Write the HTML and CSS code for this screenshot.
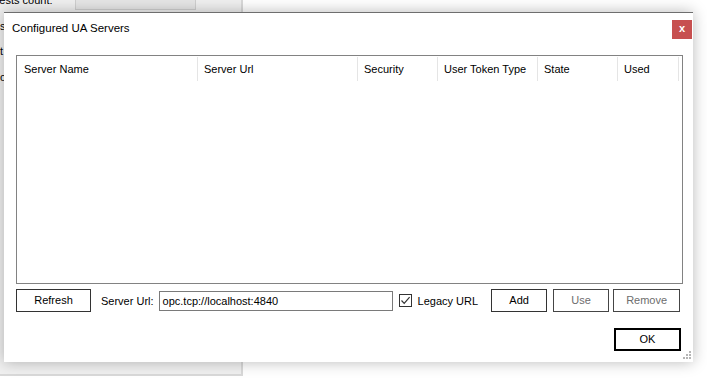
FILE: index.html
```html
<!DOCTYPE html>
<html>
<head>
<meta charset="utf-8">
<title>Configured UA Servers</title>
<link rel="stylesheet" href="styles.css">
</head>
<body>
<div class="mainForm">
    <span class="mainLabel">Requests count:</span>
    <span class="mainBox"></span>
    <span class="edgeText t1">s</span>
    <span class="edgeText t2">t</span>
    <span class="edgeText t3">o</span>
</div>

<div class="dialog">
    <div class="titleBar">
        <span class="title">Configured UA Servers</span>
        <span class="closeBtn">x</span>
    </div>
    <div class="content">
        <div class="listView">
            <div class="listHead">
                <span class="col c1">Server Name</span>
                <span class="col c2">Server Url</span>
                <span class="col c3">Security</span>
                <span class="col c4">User Token Type</span>
                <span class="col c5">State</span>
                <span class="col c6">Used</span>
            </div>
        </div>
        <div class="toolRow">
            <span class="btn btnRefresh">Refresh</span>
            <span class="lbl">Server Url:</span>
            <span class="textBox">opc.tcp://localhost:4840</span>
            <span class="checkBox">
                <svg width="11" height="11" viewBox="0 0 11 11"><path d="M1.5 5.5 L4.2 8.3 L9.6 2.2" fill="none" stroke="#333" stroke-width="1.2"/></svg>
            </span>
            <span class="lbl lblLegacy">Legacy URL</span>
            <span class="btn btnAdd">Add</span>
            <span class="btn btnUse disabled">Use</span>
            <span class="btn btnRemove disabled">Remove</span>
        </div>
        <div class="okRow">
            <span class="btn btnOk">OK</span>
        </div>
    </div>
    <svg class="grip" width="9" height="9" viewBox="0 0 9 9">
        <rect x="6" y="0" width="2" height="2" fill="#b5b5b5"/>
        <rect x="3" y="3" width="2" height="2" fill="#b5b5b5"/>
        <rect x="6" y="3" width="2" height="2" fill="#b5b5b5"/>
        <rect x="0" y="6" width="2" height="2" fill="#b5b5b5"/>
        <rect x="3" y="6" width="2" height="2" fill="#b5b5b5"/>
        <rect x="6" y="6" width="2" height="2" fill="#b5b5b5"/>
    </svg>
</div>
</body>
</html>
```

FILE: styles.css
```css
* { margin: 0; padding: 0; box-sizing: border-box; }
body { background: #fff; font-family: "Liberation Sans", Arial, sans-serif; font-size: 11px; color: #000; width: 707px; height: 385px; overflow: hidden; position: relative; }

/* window behind the dialog */
.mainForm { position: absolute; left: 0; top: 0; width: 243px; height: 376px; background: #f0f0f0; border-right: 2px solid #d9d9d9; border-bottom: 2px solid #d9d9d9; }
.mainLabel { position: absolute; left: -27px; top: -6px; }
.mainBox { position: absolute; left: 75px; top: -4px; width: 121px; height: 14px; background: #e6e6e6; border: 1px solid #cfcfcf; }
.edgeText { position: absolute; left: 0; }
.t1 { top: 20px; }
.t2 { top: 45px; }
.t3 { top: 71px; }

/* dialog */
.dialog { position: absolute; left: 4px; top: 12px; width: 689px; height: 350px; background: #fff; border-top: 1px solid #6e6e6e; box-shadow: 0 0 14px rgba(0,0,0,0.28); display: flex; flex-direction: column; }
.titleBar { height: 34px; display: flex; justify-content: space-between; align-items: flex-start; padding: 0 1px 0 8px; }
.title { margin-top: 8px; line-height: 14px; font-size: 11.5px; }
.closeBtn { margin-top: 7px; width: 20px; height: 19px; background: #c75050; color: #fff; font-weight: bold; font-size: 11px; line-height: 17px; text-align: center; }

.content { padding: 8px 10px 0 12px; display: flex; flex-direction: column; }
.listView { height: 229px; border: 1px solid #828282; }
.listHead { display: flex; height: 25px; padding-top: 1px; }
.col { height: 24px; line-height: 24px; padding-left: 6px; border-right: 1px solid #e5e5e5; white-space: nowrap; overflow: hidden; }
.c1 { width: 181px; padding-left: 7px; }
.c2 { width: 160px; }
.c3 { width: 80px; }
.c4 { width: 100px; }
.c5 { width: 80px; }
.c6 { width: 61px; }

.toolRow { display: flex; align-items: center; height: 23px; margin-top: 5px; }
.toolRow > * { flex-shrink: 0; white-space: nowrap; }
.btn { display: inline-block; height: 23px; line-height: 21px; text-align: center; border: 1px solid #333; background: #fff; }
.btn.disabled { color: #6d6d6d; border-color: #454545; }
.btnRefresh { width: 75px; }
.lbl { margin-left: 10px; }
.textBox { margin-left: 5px; width: 234px; height: 20px; line-height: 18px; padding-left: 3px; border: 1px solid #7a7a7a; }
.checkBox { margin-left: 6px; width: 13px; height: 13px; border: 1px solid #333; display: flex; align-items: center; justify-content: center; }
.lblLegacy { margin-left: 6px; }
.btnAdd { margin-left: 13px; width: 56px; }
.btnUse { margin-left: 6px; width: 56px; }
.btnRemove { margin-left: 4px; width: 67px; }

.okRow { display: flex; justify-content: flex-end; padding-right: 2px; margin-top: 16px; }
.btnOk { width: 67px; height: 23px; border: 2px solid #000; line-height: 19px; }

.grip { position: absolute; right: 1px; bottom: 2px; }
```
